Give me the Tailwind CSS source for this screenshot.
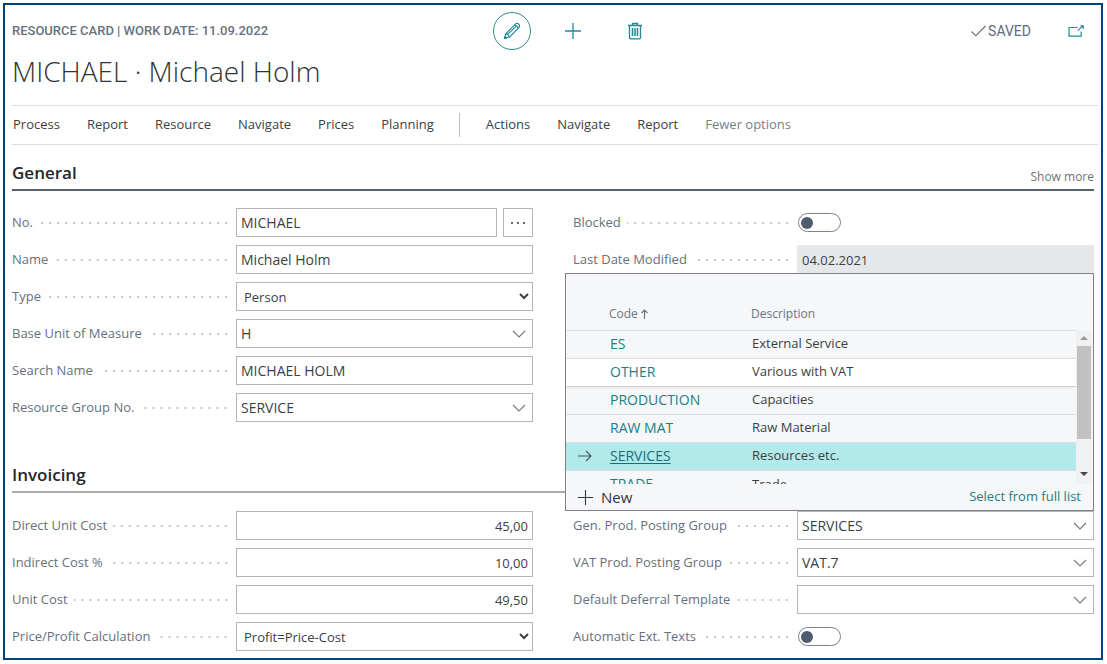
<!DOCTYPE html>
<html lang="en">
<head>
  <meta charset="UTF-8" />
  <meta name="viewport" content="width=device-width, initial-scale=1.0"/>
  <title>Resource Card - MICHAEL</title>
  <script src="https://cdn.jsdelivr.net/npm/@tailwindcss/browser@4"></script>
</head>
<body class="bg-white font-['Open_Sans',sans-serif] text-[13px] text-[#3b3f44]">
  <div class="mt-[3px] mb-1 ml-[3px] mr-1 border-2 border-[#00427a] px-[7px] pb-[7px]">

    <!-- Top bar -->
    <header class="flex items-center pt-[7px] pr-[10px]">
      <div class="w-[44.5%] font-[Roboto,sans-serif] font-medium text-[#667180]">RESOURCE CARD | WORK DATE: 11.09.2022</div>
      <div class="flex items-center gap-[33px] text-[#1f8a8f]">
        <button aria-label="Edit" class="ml-1 flex size-[38px] items-center justify-center rounded-full border border-[#2b8c91]">
          <svg class="size-[18px]" viewBox="0 0 18 18" fill="none" stroke="currentColor" stroke-width="1.1" stroke-linejoin="round"><path d="M1.5 16.5L2.7 11.8L12.7 1.8Q14.4 .8 15.8 2.2Q17.2 3.6 16.2 5.3L6.2 15.3Z"/><path d="M2.7 11.8Q5.8 12.2 6.2 15.3M11.5 3Q14.5 3.5 15 6.5M4.6 12.4L13 4.3M1.5 16.5L3.6 16L2.1 14.4Z"/></svg>
        </button>
        <button aria-label="New record" class="flex w-[18px] items-center justify-center">
          <svg class="size-[18px] shrink-0" viewBox="0 0 18 18" fill="none" stroke="currentColor" stroke-width="1.3"><path d="M9 1V17M1 9H17"/></svg>
        </button>
        <button aria-label="Delete" class="flex w-10 items-center justify-center">
          <svg class="h-[18px] w-4 shrink-0" viewBox="0 0 16 18" fill="none" stroke="currentColor" stroke-width="1.3"><path d="M1 3.5H15M5.5 3.5V1.5H10.5V3.5M2.5 3.5V15.5Q2.5 16.8 3.8 16.8H12.2Q13.5 16.8 13.5 15.5V3.5"/><path d="M5.5 6V14M8 6V14M10.5 6V14" stroke-width="1.5"/></svg>
        </button>
      </div>
      <div class="ml-auto flex items-center font-[Roboto,sans-serif] text-sm text-[#5f6b7a]">
        <svg class="mr-[2px] h-3 w-[15px]" viewBox="0 0 15 12" fill="none" stroke="currentColor" stroke-width="1.1"><path d="M.5 6.5L4.8 10.8L14.5 1"/></svg>
        <span>SAVED</span>
        <button aria-label="Open in new window" class="ml-[37px] text-[#1f8a8f]">
          <svg class="h-3 w-4" viewBox="0 0 16 12" fill="none" stroke="currentColor" stroke-width="1.2"><path d="M9.5 2.5H1V11.2H13.2V6.5M9.8 5.6L14 1.6"/><path d="M11.8 .2H15.8V4.2Z" fill="currentColor" stroke="none"/></svg>
        </button>
      </div>
    </header>

    <h1 class="mt-[3px] text-[28px] leading-9 font-light text-[#2f3338]">MICHAEL · Michael Holm</h1>

    <!-- Action bar -->
    <nav class="mt-4 -mr-[4px] flex h-10 items-center border-y border-[#dcdddf] pl-px text-[#3b3f44]">
      <div class="flex gap-[27px]">
        <a href="#">Process</a>
        <a href="#">Report</a>
        <a href="#">Resource</a>
        <a href="#">Navigate</a>
        <a href="#">Prices</a>
        <a href="#">Planning</a>
      </div>
      <span class="ml-[25px] mr-[26px] h-6 border-l border-[#bfc3c8]"></span>
      <div class="flex gap-[27px]">
        <a href="#">Actions</a>
        <a href="#">Navigate</a>
        <a href="#">Report</a>
        <a href="#" class="text-[#75808d]">Fewer options</a>
      </div>
    </nav>

    <!-- General -->
    <section>
      <div class="mt-4 flex h-[30px] items-start justify-between border-b-2 border-[#56616e]">
        <h2 class="text-[17px] leading-6 font-semibold text-[#24272b]">General</h2>
        <a href="#" class="pt-1 text-xs leading-6 text-[#6b7581]">Show more</a>
      </div>

      <div class="mt-[17px] grid grid-cols-2 gap-x-10">
        <div class="flex flex-col gap-2">
          <div class="flex h-[29px] items-center">
            <div class="flex w-[224px] shrink-0 items-center pr-[6px] text-[#66707d]">
              <label for="no">No.</label>
              <span class="ml-[6px] h-2 flex-1 bg-[radial-gradient(circle,#c3c7cc_1px,transparent_1px)] bg-[size:8px_8px] bg-right"></span>
            </div>
            <input id="no" value="MICHAEL" class="h-full min-w-0 flex-1 border border-[#b5b6b8] px-1 text-sm">
            <button aria-label="Assist edit" class="ml-[6px] flex h-full w-[30px] items-center justify-center border border-[#b5b6b8]">
              <svg class="h-1 w-4" viewBox="0 0 16 4" fill="#33373c"><circle cx="2" cy="2" r="1"/><circle cx="8" cy="2" r="1"/><circle cx="14" cy="2" r="1"/></svg>
            </button>
          </div>
          <div class="flex h-[29px] items-center">
            <div class="flex w-[224px] shrink-0 items-center pr-[6px] text-[#66707d]">
              <label for="name">Name</label>
              <span class="ml-[6px] h-2 flex-1 bg-[radial-gradient(circle,#c3c7cc_1px,transparent_1px)] bg-[size:8px_8px] bg-right"></span>
            </div>
            <input id="name" value="Michael Holm" class="h-full min-w-0 flex-1 border border-[#b5b6b8] px-1 text-sm">
          </div>
          <div class="flex h-[29px] items-center">
            <div class="flex w-[224px] shrink-0 items-center pr-[6px] text-[#66707d]">
              <label for="type">Type</label>
              <span class="ml-[6px] h-2 flex-1 bg-[radial-gradient(circle,#c3c7cc_1px,transparent_1px)] bg-[size:8px_8px] bg-right"></span>
            </div>
            <select id="type" class="h-full min-w-0 flex-1 border border-[#b5b6b8] bg-white pl-[3px]"><option>Person</option><option>Machine</option></select>
          </div>
          <div class="flex h-[29px] items-center">
            <div class="flex w-[224px] shrink-0 items-center pr-[6px] text-[#66707d]">
              <label for="unit">Base Unit of Measure</label>
              <span class="ml-[6px] h-2 flex-1 bg-[radial-gradient(circle,#c3c7cc_1px,transparent_1px)] bg-[size:8px_8px] bg-right"></span>
            </div>
            <div class="flex h-full min-w-0 flex-1 border border-[#b5b6b8]">
              <input id="unit" value="H" class="min-w-0 flex-1 px-1 text-sm">
              <button aria-label="Look up unit" class="px-[6px]"><svg class="h-2 w-[14px]" viewBox="0 0 14 8" fill="none" stroke="#74787d" stroke-width="1.1"><path d="M1 1L7 7L13 1"/></svg></button>
            </div>
          </div>
          <div class="flex h-[29px] items-center">
            <div class="flex w-[224px] shrink-0 items-center pr-[6px] text-[#66707d]">
              <label for="search">Search Name</label>
              <span class="ml-[6px] h-2 flex-1 bg-[radial-gradient(circle,#c3c7cc_1px,transparent_1px)] bg-[size:8px_8px] bg-right"></span>
            </div>
            <input id="search" value="MICHAEL HOLM" class="h-full min-w-0 flex-1 border border-[#b5b6b8] px-1 text-sm">
          </div>
          <div class="flex h-[29px] items-center">
            <div class="flex w-[224px] shrink-0 items-center pr-[6px] text-[#66707d]">
              <label for="group">Resource Group No.</label>
              <span class="ml-[6px] h-2 flex-1 bg-[radial-gradient(circle,#c3c7cc_1px,transparent_1px)] bg-[size:8px_8px] bg-right"></span>
            </div>
            <div class="flex h-full min-w-0 flex-1 border border-[#b5b6b8]">
              <input id="group" value="SERVICE" class="min-w-0 flex-1 px-1 text-sm">
              <button aria-label="Look up resource group" class="px-[6px]"><svg class="h-2 w-[14px]" viewBox="0 0 14 8" fill="none" stroke="#74787d" stroke-width="1.1"><path d="M1 1L7 7L13 1"/></svg></button>
            </div>
          </div>
        </div>

        <div class="flex flex-col gap-2">
          <div class="flex h-[29px] items-center">
            <div class="flex w-[224px] shrink-0 items-center pr-[6px] text-[#66707d]">
              <label for="blocked">Blocked</label>
              <span class="ml-[6px] h-2 flex-1 bg-[radial-gradient(circle,#c3c7cc_1px,transparent_1px)] bg-[size:8px_8px] bg-right"></span>
            </div>
            <input id="blocked" type="checkbox" class="ml-px flex h-[19px] w-[43px] appearance-none items-center rounded-full border border-[#7a828d] px-[2px] before:size-3 before:rounded-full before:bg-[#505c6d] checked:justify-end">
          </div>
          <div class="relative flex h-[29px] items-center">
            <div class="flex w-[224px] shrink-0 items-center pr-[6px] text-[#66707d]">
              <label for="modified">Last Date Modified</label>
              <span class="ml-[6px] h-2 flex-1 bg-[radial-gradient(circle,#c3c7cc_1px,transparent_1px)] bg-[size:8px_8px] bg-right"></span>
            </div>
            <input id="modified" value="04.02.2021" readonly class="h-full min-w-0 flex-1 bg-[#e6e7e8] px-[5px]">

            <!-- Lookup list -->
            <div class="absolute top-[28px] right-0 -left-2 z-10 border border-[#7f8184] bg-[#f5f7f9]">
              <div class="flex h-[210px] overflow-hidden">
                <table class="h-max flex-1 table-fixed">
                  <thead>
                    <tr class="h-14 border-b border-[#dcdee0] text-left text-xs text-[#6b7581]">
                      <th class="w-[43px]"></th>
                      <th class="w-[142px] pt-6 font-normal">
                        <span class="flex items-center gap-[3px]">Code <svg class="h-[10px] w-[7px]" viewBox="0 0 7 10" fill="none" stroke="currentColor" stroke-width="1.2"><path d="M3.5 10V1M.5 4L3.5 1L6.5 4"/></svg></span>
                      </th>
                      <th class="pt-6 font-normal">Description</th>
                    </tr>
                  </thead>
                  <tbody>
                    <tr class="h-7 border-b border-[#dcdee0]">
                      <td></td><td class="pl-px text-sm"><a href="#" class="text-[#217f83]">ES</a></td><td class="pl-px">External Service</td>
                    </tr>
                    <tr class="h-7 border-b border-[#cfd1d3] bg-white shadow">
                      <td></td><td class="pl-px text-sm"><a href="#" class="text-[#217f83]">OTHER</a></td><td class="pl-px">Various with VAT</td>
                    </tr>
                    <tr class="h-7 border-b border-[#dcdee0]">
                      <td></td><td class="pl-px text-sm"><a href="#" class="text-[#217f83]">PRODUCTION</a></td><td class="pl-px">Capacities</td>
                    </tr>
                    <tr class="h-7 border-b border-[#dcdee0]">
                      <td></td><td class="pl-px text-sm"><a href="#" class="text-[#217f83]">RAW MAT</a></td><td class="pl-px">Raw Material</td>
                    </tr>
                    <tr class="h-7 border-b border-[#dcdee0] bg-[#b2e9eb]">
                      <td class="pl-3"><svg class="h-3 w-[14px]" viewBox="0 0 14 12" fill="none" stroke="#41595f" stroke-width="1.1"><path d="M0 6H13M8 1L13 6L8 11"/></svg></td><td class="pl-px text-sm"><a href="#" class="text-[#1a6d72] underline underline-offset-2">SERVICES</a></td><td class="pl-px">Resources etc.</td>
                    </tr>
                    <tr class="h-7">
                      <td></td><td class="pl-px text-sm"><a href="#" class="text-[#217f83]">TRADE</a></td><td class="pl-px">Trade</td>
                    </tr>
                  </tbody>
                </table>
                <div class="mt-14 mr-px flex w-4 flex-col items-center bg-[#f0f1f2]">
                  <svg class="my-[6px] h-1 w-2 shrink-0" viewBox="0 0 8 4" fill="#9b9b9b"><path d="M0 4L4 0L8 4Z"/></svg>
                  <span class="h-[93px] w-[14px] bg-[#c1c1c1]"></span>
                  <svg class="mt-auto mb-2 h-1 w-2 shrink-0" viewBox="0 0 8 4" fill="#474747"><path d="M0 0L4 4L8 0Z"/></svg>
                </div>
              </div>
              <div class="flex h-[26px] items-center justify-between pr-3 pl-3">
                <button class="flex items-center gap-2 text-[15px] text-[#33373c]"><svg class="size-[15px]" viewBox="0 0 15 15" fill="none" stroke="currentColor" stroke-width="1.1"><path d="M7.5 0V15M0 7.5H15"/></svg>New</button>
                <a href="#" class="text-[#217f83]">Select from full list</a>
              </div>
            </div>
          </div>
        </div>
      </div>
    </section>

    <!-- Invoicing -->
    <section>
      <div class="mt-[41px] h-[30px] border-b-2 border-[#a9abb1]">
        <h2 class="text-[17px] leading-6 font-semibold text-[#24272b]">Invoicing</h2>
      </div>

      <div class="mt-[18px] grid grid-cols-2 gap-x-10">
        <div class="flex flex-col gap-2">
          <div class="flex h-[29px] items-center">
            <div class="flex w-[224px] shrink-0 items-center pr-[6px] text-[#66707d]">
              <label for="direct">Direct Unit Cost</label>
              <span class="ml-[6px] h-2 flex-1 bg-[radial-gradient(circle,#c3c7cc_1px,transparent_1px)] bg-[size:8px_8px] bg-right"></span>
            </div>
            <input id="direct" value="45,00" class="h-full min-w-0 flex-1 border border-[#b5b6b8] px-1 text-right">
          </div>
          <div class="flex h-[29px] items-center">
            <div class="flex w-[224px] shrink-0 items-center pr-[6px] text-[#66707d]">
              <label for="indirect">Indirect Cost %</label>
              <span class="ml-[6px] h-2 flex-1 bg-[radial-gradient(circle,#c3c7cc_1px,transparent_1px)] bg-[size:8px_8px] bg-right"></span>
            </div>
            <input id="indirect" value="10,00" class="h-full min-w-0 flex-1 border border-[#b5b6b8] px-1 text-right">
          </div>
          <div class="flex h-[29px] items-center">
            <div class="flex w-[224px] shrink-0 items-center pr-[6px] text-[#66707d]">
              <label for="cost">Unit Cost</label>
              <span class="ml-[6px] h-2 flex-1 bg-[radial-gradient(circle,#c3c7cc_1px,transparent_1px)] bg-[size:8px_8px] bg-right"></span>
            </div>
            <input id="cost" value="49,50" class="h-full min-w-0 flex-1 border border-[#b5b6b8] px-1 text-right">
          </div>
          <div class="flex h-[29px] items-center">
            <div class="flex w-[224px] shrink-0 items-center pr-[6px] text-[#66707d]">
              <label for="profit">Price/Profit Calculation</label>
              <span class="ml-[6px] h-2 flex-1 bg-[radial-gradient(circle,#c3c7cc_1px,transparent_1px)] bg-[size:8px_8px] bg-right"></span>
            </div>
            <select id="profit" class="h-full min-w-0 flex-1 border border-[#b5b6b8] bg-white pl-[3px]"><option>Profit=Price-Cost</option><option>Price=Cost+Profit</option></select>
          </div>
        </div>

        <div class="flex flex-col gap-2">
          <div class="flex h-[29px] items-center">
            <div class="flex w-[224px] shrink-0 items-center pr-[6px] text-[#66707d]">
              <label for="gen">Gen. Prod. Posting Group</label>
              <span class="ml-[6px] h-2 flex-1 bg-[radial-gradient(circle,#c3c7cc_1px,transparent_1px)] bg-[size:8px_8px] bg-right"></span>
            </div>
            <div class="flex h-full min-w-0 flex-1 border border-[#b5b6b8]">
              <input id="gen" value="SERVICES" class="min-w-0 flex-1 px-1 text-sm">
              <button aria-label="Look up posting group" class="px-[6px]"><svg class="h-2 w-[14px]" viewBox="0 0 14 8" fill="none" stroke="#74787d" stroke-width="1.1"><path d="M1 1L7 7L13 1"/></svg></button>
            </div>
          </div>
          <div class="flex h-[29px] items-center">
            <div class="flex w-[224px] shrink-0 items-center pr-[6px] text-[#66707d]">
              <label for="vat">VAT Prod. Posting Group</label>
              <span class="ml-[6px] h-2 flex-1 bg-[radial-gradient(circle,#c3c7cc_1px,transparent_1px)] bg-[size:8px_8px] bg-right"></span>
            </div>
            <div class="flex h-full min-w-0 flex-1 border border-[#b5b6b8]">
              <input id="vat" value="VAT.7" class="min-w-0 flex-1 px-1 text-sm">
              <button aria-label="Look up VAT group" class="px-[6px]"><svg class="h-2 w-[14px]" viewBox="0 0 14 8" fill="none" stroke="#74787d" stroke-width="1.1"><path d="M1 1L7 7L13 1"/></svg></button>
            </div>
          </div>
          <div class="flex h-[29px] items-center">
            <div class="flex w-[224px] shrink-0 items-center pr-[6px] text-[#66707d]">
              <label for="deferral">Default Deferral Template</label>
              <span class="ml-[6px] h-2 flex-1 bg-[radial-gradient(circle,#c3c7cc_1px,transparent_1px)] bg-[size:8px_8px] bg-right"></span>
            </div>
            <div class="flex h-full min-w-0 flex-1 border border-[#b5b6b8]">
              <input id="deferral" value="" class="min-w-0 flex-1 px-1 text-sm">
              <button aria-label="Look up deferral template" class="px-[6px]"><svg class="h-2 w-[14px]" viewBox="0 0 14 8" fill="none" stroke="#74787d" stroke-width="1.1"><path d="M1 1L7 7L13 1"/></svg></button>
            </div>
          </div>
          <div class="flex h-[29px] items-center">
            <div class="flex w-[224px] shrink-0 items-center pr-[6px] text-[#66707d]">
              <label for="ext">Automatic Ext. Texts</label>
              <span class="ml-[6px] h-2 flex-1 bg-[radial-gradient(circle,#c3c7cc_1px,transparent_1px)] bg-[size:8px_8px] bg-right"></span>
            </div>
            <input id="ext" type="checkbox" class="ml-px flex h-[19px] w-[43px] appearance-none items-center rounded-full border border-[#7a828d] px-[2px] before:size-3 before:rounded-full before:bg-[#505c6d] checked:justify-end">
          </div>
        </div>
      </div>
    </section>
  </div>
</body>
</html>
